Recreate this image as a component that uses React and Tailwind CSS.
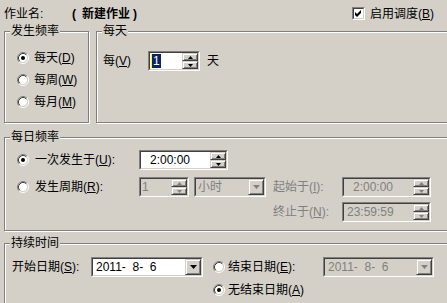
import React from "react";

const U = ({ children }) => <span className="underline">{children}</span>;

function Radio({ checked }) {
  return (
    <svg width="12" height="12" viewBox="0 0 12 12" className="shrink-0">
      <circle cx="6" cy="6" r="4.2" fill="#fff" />
      <path d="M2.11 9.89A5.5 5.5 0 0 1 9.89 2.11" fill="none" stroke="#808080" />
      <path d="M9.89 2.11A5.5 5.5 0 0 1 2.11 9.89" fill="none" stroke="#fff" />
      <path d="M2.82 9.18A4.5 4.5 0 0 1 9.18 2.82" fill="none" stroke="#404040" />
      <path d="M9.18 2.82A4.5 4.5 0 0 1 2.82 9.18" fill="none" stroke="#d4d0c8" />
      {checked && <circle cx="6" cy="6" r="2" fill="#000" />}
    </svg>
  );
}

function Checkbox() {
  return (
    <div className="w-[13px] h-[13px] shrink-0 border border-t-[#808080] border-l-[#808080] border-r-white border-b-white">
      <div className="w-full h-full border border-t-[#404040] border-l-[#404040] border-r-[#d4d0c8] border-b-[#d4d0c8] bg-white flex items-center justify-center">
        <svg width="9" height="9" viewBox="0 0 9 9">
          <path d="M1 3 L3 5 L7 1 L7 4 L3 8 L1 6 Z" fill="#000" />
        </svg>
      </div>
    </div>
  );
}

function Field({ className, disabled, children }) {
  return (
    <div className={"border border-t-[#808080] border-l-[#808080] border-r-white border-b-white shrink-0 " + className}>
      <div
        className={
          "w-full h-full flex border border-t-[#404040] border-l-[#404040] border-r-[#d4d0c8] border-b-[#d4d0c8] " +
          (disabled ? "bg-[#d4d0c8] text-[#808080]" : "bg-white text-black")
        }
      >
        {children}
      </div>
    </div>
  );
}

const btnCls =
  "flex items-center justify-center bg-[#d4d0c8] border border-t-[#d4d0c8] border-l-[#d4d0c8] border-r-[#404040] border-b-[#404040] shadow-[inset_1px_1px_0_#fff,inset_-1px_-1px_0_#808080]";

function Spin({ disabled }) {
  const c = disabled ? "#808080" : "#000";
  return (
    <div className="flex flex-col w-[16px] h-full shrink-0">
      <div className={btnCls + " flex-1"}>
        <svg width="5" height="3" viewBox="0 0 5 3">
          <path d="M2.5 0 L5 3 L0 3 Z" fill={c} />
        </svg>
      </div>
      <div className={btnCls + " flex-1"}>
        <svg width="5" height="3" viewBox="0 0 5 3">
          <path d="M0 0 L5 0 L2.5 3 Z" fill={c} />
        </svg>
      </div>
    </div>
  );
}

function Drop({ disabled }) {
  const c = disabled ? "#808080" : "#000";
  return (
    <div className={btnCls + " w-[16px] h-full shrink-0"}>
      <svg width="7" height="4" viewBox="0 0 7 4">
        <path d="M0 0 L7 0 L3.5 4 Z" fill={c} />
      </svg>
    </div>
  );
}

function Group({ label, className, children }) {
  return (
    <div className={"relative shrink-0 border border-[#808080] shadow-[1px_1px_0_#fff,inset_1px_1px_0_#fff] " + className}>
      <div className="absolute -top-[8px] left-[5px] px-[1px] bg-[#d4d0c8] leading-[14px] whitespace-nowrap">{label}</div>
      {children}
    </div>
  );
}

export default function App() {
  return (
    <div className="w-[447px] h-[303px] overflow-hidden bg-[#d4d0c8] text-[12px] leading-[14px] text-black font-['Liberation_Sans','Noto_Sans_CJK_SC',sans-serif] flex flex-col">
      {/* header */}
      <div className="h-[27px] flex items-center pl-[4px] shrink-0">
        <span className="w-[68px] shrink-0">作业名:</span>
        <span className="w-[280px] shrink-0 font-bold flex items-center">
          <span>(</span>
          <span className="ml-[6px]">新建作业</span>
          <span className="ml-[3px]">)</span>
        </span>
        <Checkbox />
        <span className="ml-[5px] whitespace-nowrap">
          启用调度(<U>B</U>)
        </span>
      </div>
      <div className="h-[4px] shrink-0" />

      {/* row of two groups */}
      <div className="flex pl-[4px] gap-[7px] shrink-0">
        <Group label="发生频率" className="w-[85px] h-[92px]">
          <div className="flex flex-col pt-[15px] pl-[12px]">
            <div className="h-[22px] flex items-center gap-[5px]">
              <Radio checked />
              <span className="whitespace-nowrap">
                每天(<U>D</U>)
              </span>
            </div>
            <div className="h-[22px] flex items-center gap-[5px]">
              <Radio />
              <span className="whitespace-nowrap">
                每周(<U>W</U>)
              </span>
            </div>
            <div className="h-[22px] flex items-center gap-[5px]">
              <Radio />
              <span className="whitespace-nowrap">
                每月(<U>M</U>)
              </span>
            </div>
          </div>
        </Group>
        <Group label="每天" className="w-[400px] h-[92px]">
          <div className="flex items-center pt-[19px] pl-[6px] h-[39px]">
            <span className="w-[45px] shrink-0 whitespace-nowrap">
              每(<U>V</U>)
            </span>
            <Field className="w-[52px] h-[20px]">
              <div className="flex-1 flex items-center pl-[1px]">
                <span className="bg-[#0a246a] text-white pl-[1px] pr-[1px] border-l border-l-[#ffff00] leading-[14px]">1</span>
              </div>
              <Spin />
            </Field>
            <span className="ml-[7px]">天</span>
          </div>
        </Group>
      </div>

      {/* daily frequency */}
      <div className="pl-[4px] mt-[14px] shrink-0">
        <Group label="每日频率" className="w-[460px] h-[94px]">
          <div className="flex flex-col pt-[12px]">
            <div className="h-[20px] flex items-center pl-[12px]">
              <Radio checked />
              <span className="ml-[6px] w-[104px] shrink-0 whitespace-nowrap">
                一次发生于(<U>U</U>):
              </span>
              <Field className="w-[89px] h-[20px]">
                <div className="flex-1 flex items-center pl-[9px]">2:00:00</div>
                <Spin />
              </Field>
            </div>
            <div className="h-[20px] mt-[7px] flex items-center pl-[12px]">
              <Radio />
              <span className="ml-[6px] w-[104px] shrink-0 whitespace-nowrap">
                发生周期(<U>R</U>):
              </span>
              <Field disabled className="w-[50px] h-[20px]">
                <div className="flex-1 flex items-center pl-[1px]">1</div>
                <Spin disabled />
              </Field>
              <Field disabled className="ml-[5px] w-[72px] h-[20px]">
                <div className="flex-1 flex items-center pl-[2px]">小时</div>
                <Drop disabled />
              </Field>
              <span className="ml-[7px] w-[69px] shrink-0 whitespace-nowrap text-[#808080]">
                起始于(<U>I</U>):
              </span>
              <Field disabled className="w-[89px] h-[20px]">
                <div className="flex-1 flex items-center pl-[9px]">2:00:00</div>
                <Spin disabled />
              </Field>
            </div>
            <div className="h-[20px] mt-[5px] flex items-center pl-[268px]">
              <span className="w-[69px] shrink-0 whitespace-nowrap text-[#808080]">
                终止于(<U>N</U>):
              </span>
              <Field disabled className="w-[89px] h-[20px]">
                <div className="flex-1 flex items-center pl-[3px]">23:59:59</div>
                <Spin disabled />
              </Field>
            </div>
          </div>
        </Group>
      </div>

      {/* duration */}
      <div className="pl-[4px] mt-[12px] shrink-0">
        <Group label="持续时间" className="w-[460px] h-[90px]">
          <div className="flex flex-col pt-[13px]">
            <div className="h-[20px] flex items-center pl-[7px]">
              <span className="w-[79px] shrink-0 whitespace-nowrap">
                开始日期(<U>S</U>):
              </span>
              <Field className="w-[112px] h-[20px]">
                <div className="flex-1 flex items-center pl-[3px] whitespace-pre">2011-  8-  6</div>
                <Drop />
              </Field>
              <div className="ml-[10px]">
                <Radio />
              </div>
              <span className="ml-[3px] w-[95px] shrink-0 whitespace-nowrap">
                结束日期(<U>E</U>):
              </span>
              <Field disabled className="w-[111px] h-[20px]">
                <div className="flex-1 flex items-center pl-[3px] whitespace-pre">2011-  8-  6</div>
                <Drop disabled />
              </Field>
            </div>
            <div className="h-[20px] mt-[3px] flex items-center pl-[208px]">
              <Radio checked />
              <span className="ml-[3px] whitespace-nowrap">
                无结束日期(<U>A</U>)
              </span>
            </div>
          </div>
        </Group>
      </div>
    </div>
  );
}
